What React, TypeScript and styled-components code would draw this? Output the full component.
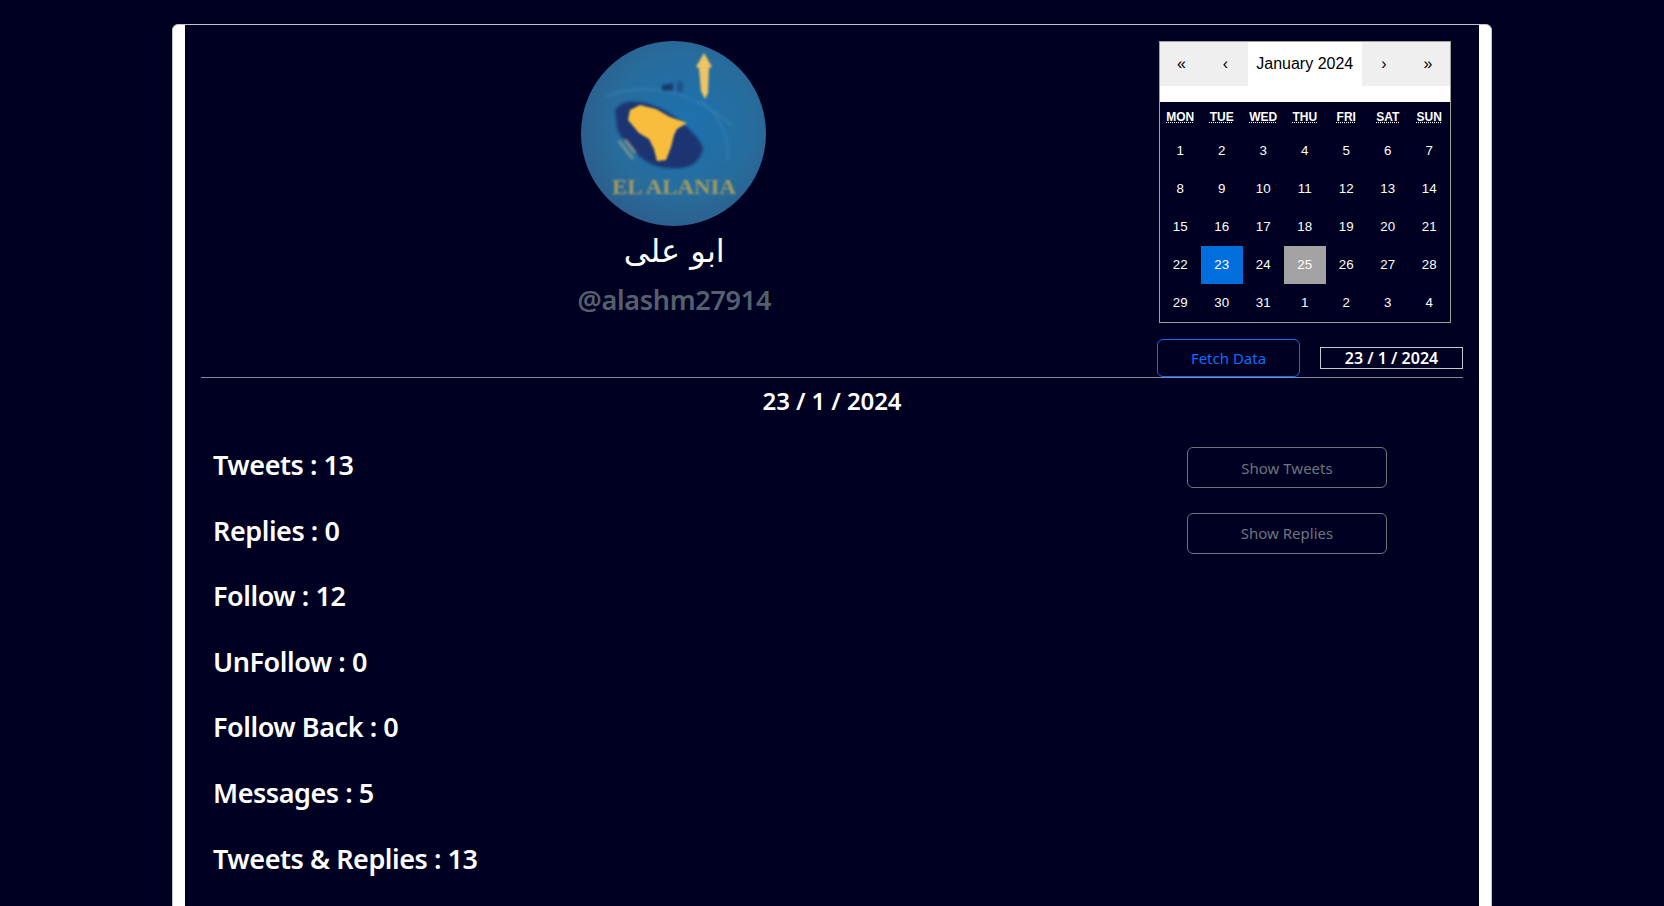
import styled, { createGlobalStyle, css } from 'styled-components';

const GlobalStyle = createGlobalStyle`
  html, body {
    margin: 0;
    height: 100%;
    overflow: hidden;
    background: #000022;
  }
  body {
    font-family: "Noto Sans", "Open Sans", sans-serif;
    color: #fff;
  }
`;

const Card = styled.div`
  box-sizing: border-box;
  width: 1320px;
  margin: 24px auto 0;
  padding: 0 12px;
  background: #fff;
  border: 1px solid #c4c4c4;
  border-radius: 6px;
`;

const Inner = styled.div`
  background: #000022;
  padding: 16px;
  height: 900px;
`;

const TopRow = styled.div`
  display: grid;
  grid-template-columns: 9fr 3fr;
`;

const Profile = styled.div`
  display: flex;
  flex-direction: column;
  align-items: center;
`;

const Avatar = styled.svg`
  width: 185px;
  height: 185px;
  display: block;
  margin-left: -1px;
`;

const Name = styled.div`
  margin-top: 3px;
  font-family: "DejaVu Sans", sans-serif;
  font-size: 32px;
  line-height: 44px;
  direction: rtl;
`;

const Handle = styled.div`
  margin-top: 10px;
  font-size: 27px;
  line-height: 34px;
  font-weight: 600;
  letter-spacing: -0.3px;
  color: #55606e;
`;

const CalendarCol = styled.div`
  padding: 0 12px 0 11px;
`;

const Calendar = styled.div`
  box-sizing: border-box;
  border: 1px solid #a0a096;
  background: #fff;
  font-family: "Liberation Sans", Arial, sans-serif;
  line-height: 18px;
`;

const Nav = styled.div`
  display: flex;
  height: 44px;
  margin-bottom: 16px;
`;

const NavButton = styled.button`
  min-width: 44px;
  border: 0;
  padding: 0;
  background: #efefef;
  color: #000;
  font: inherit;
  font-size: 16px;
`;

const NavLabel = styled.button`
  flex: 1;
  border: 0;
  padding: 0;
  background: #fff;
  color: #000;
  font: inherit;
  font-size: 16px;
`;

const Month = styled.div`
  background: #000022;
`;

const Weekdays = styled.div`
  display: grid;
  grid-template-columns: repeat(7, 1fr);
`;

const Weekday = styled.div`
  padding: 6px;
  font-size: 12px;
  font-weight: 700;
  text-align: center;
  text-transform: uppercase;
  color: #fff;
`;

const WeekdayAbbr = styled.abbr`
  text-decoration: underline dotted;
`;

const Days = styled.div`
  display: grid;
  grid-template-columns: repeat(7, 1fr);
`;

const Tile = styled.button<{ $state?: 'active' | 'now' }>`
  border: 0;
  padding: 10px 6.667px;
  background: transparent;
  color: #fff;
  font-family: inherit;
  font-size: 13.33px;
  line-height: 18px;
  text-align: center;
  ${props => props.$state === 'active' && css`
    background: #006edc;
  `}
  ${props => props.$state === 'now' && css`
    background: #a3a3a3;
  `}
`;

const ActionRow = styled.div`
  display: flex;
  justify-content: flex-end;
  align-items: center;
  gap: 20px;
  margin-top: 16px;
`;

const FetchButton = styled.button`
  box-sizing: border-box;
  width: 143px;
  height: 38px;
  border: 1px solid #0d6efd;
  border-radius: 6px;
  background: transparent;
  color: #0d6efd;
  font: inherit;
  font-size: 15px;
`;

const DateBox = styled.div`
  box-sizing: border-box;
  width: 143px;
  height: 22px;
  border: 1px solid #c8c8c8;
  font-size: 16px;
  font-weight: 600;
  line-height: 20px;
  text-align: center;
`;

const Divider = styled.div`
  height: 1px;
  background: #8a8a94;
`;

const DateTitle = styled.div`
  margin: 8px 0 32px;
  font-size: 24px;
  font-weight: 600;
  line-height: 29px;
  text-align: center;
  letter-spacing: -0.1px;
`;

const StatRow = styled.div`
  display: flex;
  justify-content: space-between;
  align-items: flex-start;
  height: 65.6px;
  padding: 0 76px 0 12px;
`;

const StatLabel = styled.div`
  padding-top: 1px;
  font-size: 27px;
  font-weight: 600;
  line-height: 34px;
  letter-spacing: -0.45px;
`;

const ShowButton = styled.button`
  box-sizing: border-box;
  width: 200px;
  height: 41px;
  border: 1px solid #6c757d;
  border-radius: 6px;
  background: transparent;
  color: #6c757d;
  font: inherit;
  font-size: 15px;
`;

const weekdays = ['Mon', 'Tue', 'Wed', 'Thu', 'Fri', 'Sat', 'Sun'];
const days = [
  1, 2, 3, 4, 5, 6, 7, 8, 9, 10, 11, 12, 13, 14, 15, 16, 17, 18,
  19, 20, 21, 22, 23, 24, 25, 26, 27, 28, 29, 30, 31, 1, 2, 3, 4,
];

const stats = [
  { label: 'Tweets : 13', action: 'Show Tweets' },
  { label: 'Replies : 0', action: 'Show Replies' },
  { label: 'Follow : 12' },
  { label: 'UnFollow : 0' },
  { label: 'Follow Back : 0' },
  { label: 'Messages : 5' },
  { label: 'Tweets & Replies : 13' },
];

function Logo() {
  return (
    <Avatar viewBox="0 0 185 185">
      <defs>
        <radialGradient id="disc" cx="55%" cy="45%" r="60%">
          <stop offset="0%" stopColor="#1c72b0" />
          <stop offset="65%" stopColor="#276c9c" />
          <stop offset="100%" stopColor="#2d5c8a" />
        </radialGradient>
        <filter id="soft" x="-20%" y="-20%" width="140%" height="140%">
          <feGaussianBlur stdDeviation="1.6" />
        </filter>
        <filter id="softer" x="-20%" y="-20%" width="140%" height="140%">
          <feGaussianBlur stdDeviation="0.9" />
        </filter>
        <filter id="blurText" x="-10%" y="-30%" width="120%" height="160%">
          <feGaussianBlur stdDeviation="1.3" />
        </filter>
      </defs>
      <circle cx="92.5" cy="92.5" r="92.5" fill="url(#disc)" />
      <g filter="url(#soft)" fill="none">
        <path d="M24 56 C60 40 110 48 150 84" stroke="#3a84b4" strokeWidth="1.2" />
        <path d="M120 60 C140 76 150 100 146 120" stroke="#2f80b8" strokeWidth="1.5" />
        <path d="M34 69 C38 62 48 59 56 61 C76 62 98 76 112 92 C118 98 122 104 122 109 C118 122 108 127 99 127 C88 128 78 126 72 124 C60 118 52 110 46 102 C40 96 36 90 36 86 Z" fill="#1a3672" />
        <path d="M81 44 L92 42 L92 50 L81 50 Z" fill="#133a6c" />
        <path d="M96 40 L102 40 L102 51 L96 51 Z" fill="#1a5288" />
        <path d="M38 100 L52 118 M44 99 L54 112" stroke="#a3ab8e" strokeWidth="2" />
      </g>
      <g filter="url(#softer)">
        <path d="M123 12 L131 26 L128 27 L127 52 L124 58 L120 50 L118 27 L115 26 Z" fill="#eec562" />
        <path d="M49 69 L59 64 L75 68 L89 76 L106 82 L96 88 L93 94 L90 106 L85 119 L76 120 L73 108 L68 98 L58 92 L47 79 Z" fill="#f8bd3c" />
      </g>
      <text x="93" y="153" filter="url(#blurText)" textAnchor="middle" fontFamily="Liberation Serif, serif" fontWeight="700" fontSize="21" fill="#a39c62" textLength="124" lengthAdjust="spacingAndGlyphs">EL ALANIA</text>
    </Avatar>
  );
}

export default function App() {
  return (
    <>
      <GlobalStyle />
      <Card>
        <Inner>
          <TopRow>
            <Profile>
              <Logo />
              <Name>ابو على</Name>
              <Handle>@alashm27914</Handle>
            </Profile>
            <CalendarCol>
              <Calendar>
                <Nav>
                  <NavButton>«</NavButton>
                  <NavButton>‹</NavButton>
                  <NavLabel>January 2024</NavLabel>
                  <NavButton>›</NavButton>
                  <NavButton>»</NavButton>
                </Nav>
                <Month>
                  <Weekdays>
                    {weekdays.map(day => (
                      <Weekday key={day}>
                        <WeekdayAbbr>{day}</WeekdayAbbr>
                      </Weekday>
                    ))}
                  </Weekdays>
                  <Days>
                    {days.map((day, i) => (
                      <Tile key={i} $state={i === 22 ? 'active' : i === 24 ? 'now' : undefined}>
                        {day}
                      </Tile>
                    ))}
                  </Days>
                </Month>
              </Calendar>
            </CalendarCol>
          </TopRow>
          <ActionRow>
            <FetchButton>Fetch Data</FetchButton>
            <DateBox>23 / 1 / 2024</DateBox>
          </ActionRow>
          <Divider />
          <DateTitle>23 / 1 / 2024</DateTitle>
          {stats.map(stat => (
            <StatRow key={stat.label}>
              <StatLabel>{stat.label}</StatLabel>
              {stat.action && <ShowButton>{stat.action}</ShowButton>}
            </StatRow>
          ))}
        </Inner>
      </Card>
    </>
  );
}
